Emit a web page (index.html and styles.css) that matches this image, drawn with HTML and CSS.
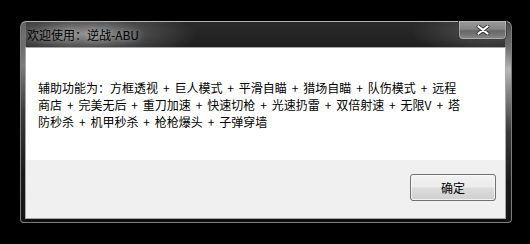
FILE: index.html
```html
<!DOCTYPE html>
<html lang="zh-CN">
<head>
<meta charset="utf-8">
<title>欢迎使用：逆战-ABU</title>
<link rel="stylesheet" href="styles.css">
</head>
<body>
<div class="window">
  <div class="titlebar">
    <span class="title">欢迎使用：逆战-ABU</span>
    <div class="close">
      <svg width="14" height="10" viewBox="0 0 14 10" aria-hidden="true">
        <path d="M2.5 1.5 L11.5 8.5 M11.5 1.5 L2.5 8.5" stroke="#3a3a3a" stroke-width="4" stroke-linecap="round"/>
        <path d="M2.5 1.5 L11.5 8.5 M11.5 1.5 L2.5 8.5" stroke="#ffffff" stroke-width="2.2" stroke-linecap="round"/>
      </svg>
    </div>
  </div>
  <div class="client">
    <div class="message">
      <p class="text">辅助功能为：方框透视 + 巨人模式 + 平滑自瞄 + 猎场自瞄 + 队伤模式 + 远程<br>商店 + 完美无后 + 重刀加速 + 快速切枪 + 光速扔雷 + 双倍射速 + 无限V + 塔<br>防秒杀 + 机甲秒杀 + 枪枪爆头 + 子弹穿墙</p>
    </div>
    <div class="actions">
      <button class="btn" type="button">确定</button>
    </div>
  </div>
</div>
</body>
</html>
```
FILE: styles.css
```css
html, body {
  margin: 0;
  padding: 0;
  background: #000;
}

body {
  width: 530px;
  height: 244px;
  overflow: hidden;
  font-family: "Noto Sans CJK SC", "Noto Sans", sans-serif;
  font-size: 12px;
  color: #000;
}

.window {
  box-sizing: border-box;
  width: 492px;
  height: 202px;
  margin: 21px 0 0 20px;
  border: 1px solid #7e7e7e;
  border-top-color: #b4b4b4;
  border-radius: 6px 6px 4px 4px;
  padding: 0 5px 3px 4px;
  display: flex;
  flex-direction: column;
  background:
    radial-gradient(ellipse 110px 28px at 66px 12px, rgba(175,175,175,0.8), rgba(120,120,120,0.4) 55%, rgba(0,0,0,0) 100%),
    radial-gradient(ellipse 80px 24px at 470px 10px, rgba(130,130,130,0.5), rgba(0,0,0,0) 100%),
    linear-gradient(to bottom, #5a5a5a 0, #7a7a7a 22%, #3a3a3a 45%, #1a1a1a 75%, #141414 100%) left top / 5px 100% no-repeat,
    linear-gradient(to bottom, #2a2a2a 0, #6a6a6a 12%, #b8b8b8 24%, #8a8a8a 34%, #3a3a3a 55%, #1a1a1a 80%, #141414 100%) right top / 6px 100% no-repeat,
    linear-gradient(to bottom, #2a2a2a 0, #111 30%, #0e0e0e 100%);
}

.titlebar {
  height: 25px;
  display: flex;
  align-items: flex-start;
  justify-content: space-between;
}

.title {
  margin: 4px 0 0 2px;
  line-height: 17px;
  font-size: 12px;
  color: #000;
  text-shadow: 0 0 6px rgba(255,255,255,0.5);
}

.close {
  box-sizing: border-box;
  width: 49px;
  height: 19px;
  margin-top: -1px;
  margin-right: -1px;
  border: 1px solid #3c3c3c;
  border-top: 0;
  border-radius: 0 0 5px 5px;
  background: linear-gradient(to bottom, #9a9a9a 0, #858585 45%, #666 55%, #888 100%);
  box-shadow: inset 0 0 0 1px rgba(210,210,210,0.5);
  display: flex;
  align-items: center;
  justify-content: center;
}

.close svg {
  display: block;
}

.client {
  flex: 1;
  border: 1px solid #a8a8a8;
  display: flex;
  flex-direction: column;
  background: #f0f0f0;
}

.message {
  height: 112px;
  box-sizing: border-box;
  background: #fff;
  padding: 31px 0 0 12px;
}

.text {
  margin: 0;
  line-height: 17px;
  white-space: nowrap;
  word-spacing: 2.2px;
}

.actions {
  flex: 1;
  display: flex;
  justify-content: flex-end;
  align-items: flex-start;
  padding: 14px 9px 0 0;
}

.btn {
  box-sizing: border-box;
  width: 86px;
  height: 27px;
  border: 1px solid #707070;
  border-radius: 3px;
  background: linear-gradient(to bottom, #f2f2f2 0, #ebebeb 48%, #dddddd 52%, #cfcfcf 100%);
  box-shadow: inset 0 0 0 1px rgba(255,255,255,0.7);
  font-family: "Noto Sans CJK SC", "Noto Sans", sans-serif;
  font-size: 12px;
  color: #000;
  padding: 0;
  line-height: 25px;
}
```
